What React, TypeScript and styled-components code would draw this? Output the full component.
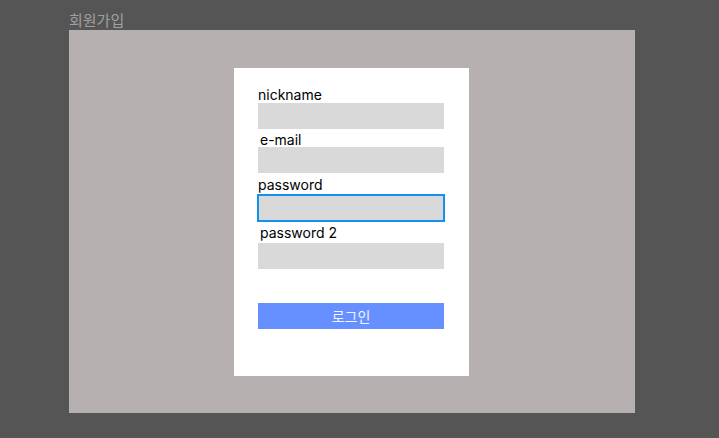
import React from "react";
import styled, { createGlobalStyle } from "styled-components";

const Global = createGlobalStyle`
  html, body { margin: 0; padding: 0; background: #555555; }
  body { font-family: Inter, "Noto Sans CJK KR", sans-serif; }
  * { box-sizing: border-box; }
`;

const Page = styled.div`
  width: 719px;
  height: 438px;
  background: #555555;
  padding: 9px 0 0 69px;
`;

const Title = styled.h1`
  margin: 0;
  height: 21px;
  font-family: "Noto Sans CJK KR", sans-serif;
  font-weight: 400;
  font-size: 15px;
  line-height: 21px;
  color: #a0a0a0;
`;

const Frame = styled.div`
  width: 566px;
  height: 383px;
  background: #b6b1b0;
  padding-right: 1px;
  display: flex;
  align-items: center;
  justify-content: center;
`;

const Card = styled.form`
  width: 235px;
  height: 308px;
  background: #ffffff;
  padding: 18px 25px 0 24px;
  display: flex;
  flex-direction: column;
`;

const Field = styled.div<{ $top: number }>`
  display: flex;
  flex-direction: column;
  margin-top: ${(p) => p.$top}px;
`;

const Label = styled.label<{ $indent: number; $gap: number }>`
  display: block;
  font-family: Inter, sans-serif;
  font-size: 14px;
  line-height: 17px;
  height: 17px;
  color: #000;
  padding-left: ${(p) => p.$indent}px;
  margin-bottom: ${(p) => p.$gap}px;
`;

const Input = styled.div<{ $focused?: boolean }>`
  width: ${(p) => (p.$focused ? 188 : 186)}px;
  height: ${(p) => (p.$focused ? 28 : 26)}px;
  margin-left: ${(p) => (p.$focused ? -1 : 0)}px;
  background: #d9d9d9;
  border: ${(p) => (p.$focused ? "2px solid #1490ee" : "none")};
`;

const Button = styled.button`
  margin-top: 34px;
  width: 186px;
  height: 26px;
  border: none;
  padding: 0;
  background: #6690ff;
  color: #f0f3ff;
  font-family: "Noto Sans CJK KR", sans-serif;
  font-size: 14px;
  line-height: 26px;
`;

const fields = [
  { label: "nickname", indent: 0, gap: 0, top: 0 },
  { label: "e-mail", indent: 2, gap: -1, top: 2 },
  { label: "password", indent: 0, gap: 1, top: 3 },
  { label: "password 2", indent: 2, gap: 2, top: 2 },
];

export default function App() {
  return (
    <Page>
      <Global />
      <Title>회원가입</Title>
      <Frame>
        <Card onSubmit={(e) => e.preventDefault()}>
          {fields.map((f, i) => (
            <Field key={f.label} $top={f.top}>
              <Label $indent={f.indent} $gap={f.gap}>
                {f.label}
              </Label>
              <Input $focused={i === 2} />
            </Field>
          ))}
          <Button type="submit">로그인</Button>
        </Card>
      </Frame>
    </Page>
  );
}
